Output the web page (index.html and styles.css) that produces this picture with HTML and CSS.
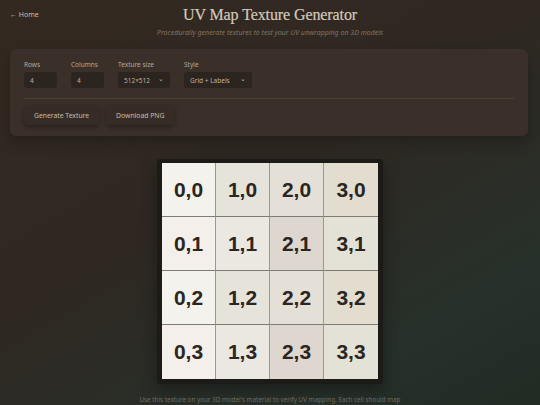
FILE: index.html
```html
<!DOCTYPE html>
<html lang="en">
<head>
  <meta charset="UTF-8">
  <meta name="viewport" content="width=device-width, initial-scale=1">
  <title>UV Map Texture Generator</title>
  <link rel="stylesheet" href="styles.css">
</head>
<body>
  <a class="home" href="#">← Home</a>
  <header>
    <h1>UV Map Texture Generator</h1>
    <p class="subtitle">Procedurally generate textures to test your UV unwrapping on 3D models</p>
  </header>

  <div class="panel">
    <div class="fields">
      <label class="field">
        <span>Rows</span>
        <input type="text" id="rows" value="4" class="num">
      </label>
      <label class="field">
        <span>Columns</span>
        <input type="text" id="cols" value="4" class="num">
      </label>
      <label class="field">
        <span>Texture size</span>
        <div class="select size">512×512 <i>⌄</i></div>
      </label>
      <label class="field">
        <span>Style</span>
        <div class="select style">Grid + Labels <i>⌄</i></div>
      </label>
    </div>
    <div class="actions">
      <button>Generate Texture</button>
      <button>Download PNG</button>
    </div>
  </div>

  <div class="preview">
    <div class="texture" id="texture"></div>
  </div>

  <p class="note">Use this texture on your 3D model's material to verify UV mapping. Each cell should map cleanly to the mesh.</p>

  <script>
    const shades = [
      ['#f4f2ed', '#e6e3db', '#e4e0d8', '#e2ddcf'],
      ['#f4efea', '#ebe7e1', '#ded7cf', '#e4e2d6']
    ];

    function renderTexture() {
      const tex = document.getElementById('texture');
      tex.innerHTML = '';
      for (let y = 0; y < 4; y++) {
        for (let x = 0; x < 4; x++) {
          const cell = document.createElement('div');
          cell.className = 'cell';
          cell.style.background = shades[y % 2][x];
          cell.textContent = x + ',' + y;
          tex.appendChild(cell);
        }
      }
    }

    renderTexture();
  </script>
</body>
</html>
```

FILE: styles.css
```css
:root {
  --text: #d6cdbf;
  --muted: #8c8173;
  --panel: #3a3029;
  --field: #2c241f;
}

body {
  margin: 0;
  height: 405px;
  overflow: hidden;
  font-family: 'Noto Sans', sans-serif;
  color: var(--text);
  background: linear-gradient(150deg, #332921 0%, #2f2822 45%, #27302a 80%, #212c25 100%);
  position: relative;
}

.home {
  position: absolute;
  left: 10px;
  top: 10px;
  font-size: 7px;
  color: #c9beb0;
  text-decoration: none;
}

header {
  text-align: center;
  padding-top: 6px;
}

h1 {
  margin: 0;
  font-family: 'Liberation Serif', serif;
  font-weight: normal;
  font-size: 16px;
  color: #d2c9bc;
  letter-spacing: -0.1px;
  -webkit-text-stroke: 0.2px #d2c9bc;
}

.subtitle {
  margin: 4px 0 0;
  font-size: 7px;
  font-style: italic;
  color: #7f7566;
}

.panel {
  margin: 12px 12px 0 10px;
  height: 87px;
  box-sizing: border-box;
  padding: 11px 14px 0;
  background: var(--panel);
  border-radius: 6px;
  box-shadow: 0 6px 14px rgba(0, 0, 0, 0.25);
}

.fields {
  display: flex;
  gap: 14px;
  padding-bottom: 10px;
  border-bottom: 1px solid #4b4037;
}

.field {
  display: flex;
  flex-direction: column;
  gap: 3px;
}

.field span {
  font-size: 6.5px;
  color: #b3a899;
}

.num, .select {
  box-sizing: border-box;
  height: 16px;
  border: none;
  border-radius: 3px;
  background: var(--field);
  color: #bdb2a3;
  font-family: inherit;
  font-size: 6.5px;
  padding: 0 6px;
  outline: none;
}

.num { width: 33px; }

.select {
  display: flex;
  align-items: center;
  justify-content: space-between;
}

.select i {
  font-style: normal;
  font-size: 7px;
  margin-top: -4px;
}

.size { width: 52px; }
.style { width: 68px; }

.actions {
  display: flex;
  gap: 7px;
  padding-top: 7px;
}

.actions button {
  height: 19px;
  padding: 0 10px;
  border: none;
  border-radius: 4px;
  background: #352c25;
  color: #c8bdae;
  font-family: inherit;
  font-size: 6.8px;
  box-shadow: 0 2px 5px rgba(0, 0, 0, 0.35);
  cursor: pointer;
}

.preview {
  display: flex;
  justify-content: center;
  margin-top: 23px;
}

.texture {
  display: grid;
  grid-template-columns: repeat(4, 54px);
  grid-template-rows: repeat(4, 54px);
  padding: 4px 5px 5px;
  background: #1d1b17;
  border-radius: 3px;
  box-shadow: 0 6px 16px rgba(0, 0, 0, 0.35);
}

.cell {
  display: flex;
  align-items: center;
  justify-content: center;
  border-right: 1px solid #9c988f;
  border-bottom: 1px solid #7f7b72;
  font-family: 'Liberation Sans', sans-serif;
  font-weight: bold;
  font-size: 21px;
  color: #2b2621;
}

.cell:nth-child(4n) { border-right: none; }
.cell:nth-child(n+13) { border-bottom: none; }

.note {
  width: 270px;
  margin: 11px auto 0;
  text-align: center;
  font-size: 6.3px;
  color: #736b5f;
  line-height: 1.5;
}
```
